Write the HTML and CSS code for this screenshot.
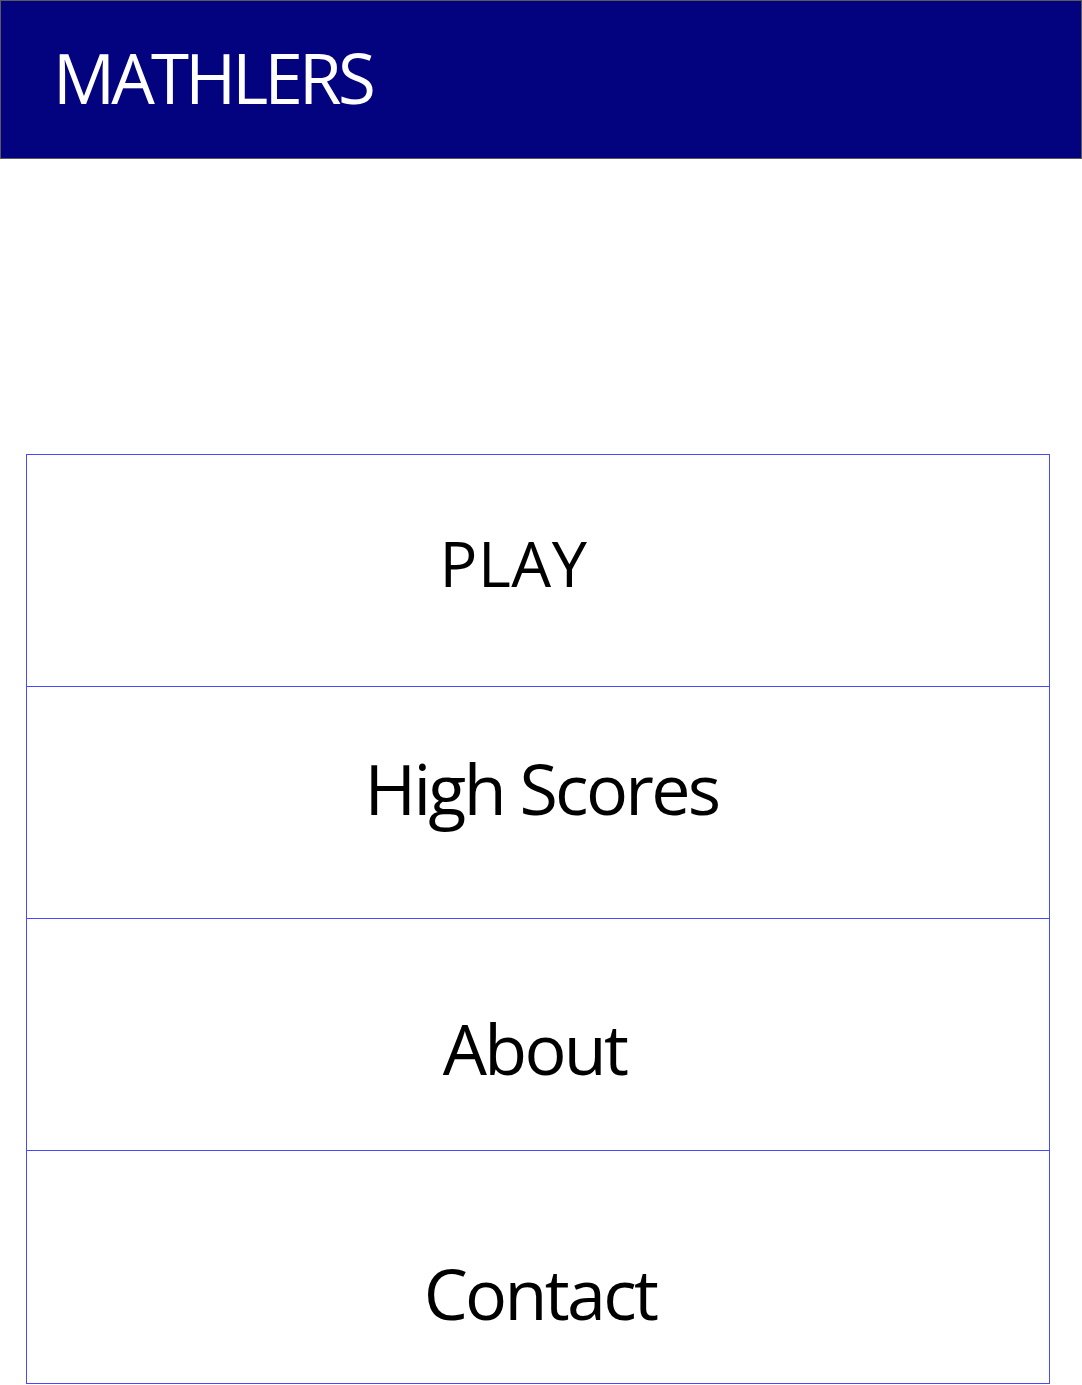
FILE: index.html
```html
<!DOCTYPE html>
<html lang="en">
<head>
<meta charset="utf-8">
<title>Mathlers</title>
<link rel="stylesheet" href="styles.css">
</head>
<body>
<header class="app-header">
  <h1 class="app-title">MATHLERS</h1>
</header>
<nav class="menu">
  <a class="menu-item menu-item--play" href="#">PLAY</a>
  <a class="menu-item menu-item--scores" href="#">High Scores</a>
  <a class="menu-item menu-item--about" href="#">About</a>
  <a class="menu-item menu-item--contact" href="#">Contact</a>
</nav>
</body>
</html>
```
FILE: styles.css
```css
html, body {
  margin: 0;
  padding: 0;
  background: #ffffff;
}

body {
  font-family: "Open Sans", "Noto Sans", sans-serif;
  width: 1082px;
}

.app-header {
  box-sizing: border-box;
  height: 159px;
  background: #03037f;
  border: 1px solid #5a5a5a;
  padding: 42px 0 0 52px;
}

.app-title {
  margin: 0;
  color: #ffffff;
  font-weight: 400;
  font-size: 69px;
  line-height: 1;
  letter-spacing: -3.8px;
}

.menu {
  display: flex;
  flex-direction: column;
  width: 1024px;
  box-sizing: border-box;
  margin: 295px 0 0 26px;
  border: 1px solid #4848ff;
}

.menu-item {
  display: block;
  box-sizing: border-box;
  height: 232px;
  border-top: 1px solid #4848ff;
  color: #000000;
  text-decoration: none;
  text-align: center;
  font-size: 70px;
  line-height: 1;
  letter-spacing: -2.7px;
}

.menu-item--play {
  border-top: none;
  height: 231px;
  font-size: 63px;
  letter-spacing: 0.5px;
  padding-top: 76px;
  padding-right: 49px;
}

.menu-item--scores {
  padding-top: 66px;
  padding-left: 7px;
}

.menu-item--about {
  padding-top: 94px;
  padding-right: 7px;
}

.menu-item--contact {
  padding-top: 107px;
  height: 233px;
  padding-left: 4px;
}
```
